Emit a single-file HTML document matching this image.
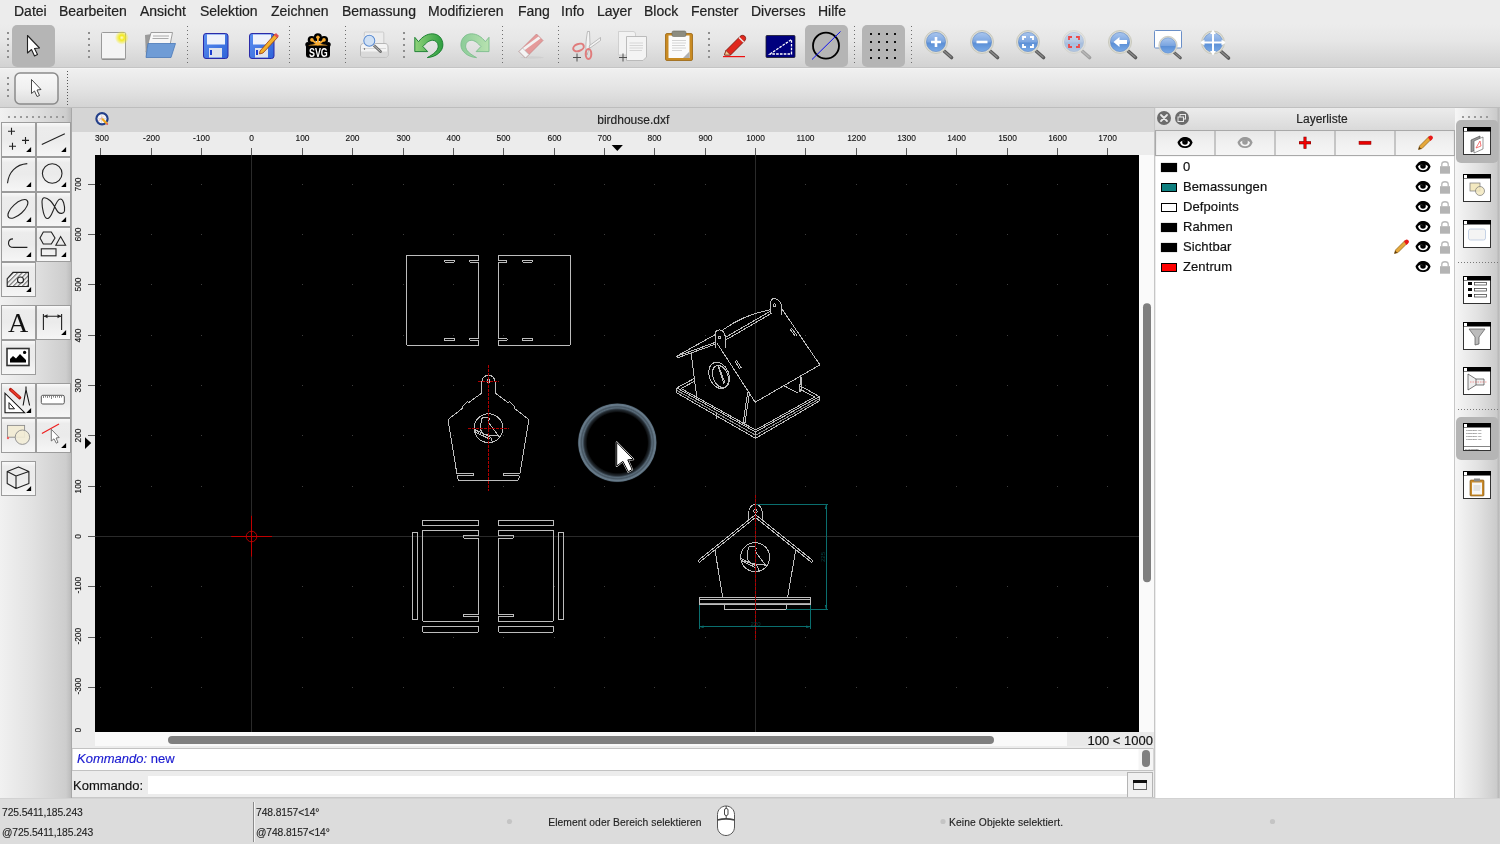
<!DOCTYPE html>
<html><head><meta charset="utf-8">
<style>
*{margin:0;padding:0;box-sizing:border-box}
html,body{width:1500px;height:844px;overflow:hidden;background:#ececec;font-family:"Liberation Sans",sans-serif;color:#222}
.a{position:absolute;will-change:transform}
#menubar{left:0;top:0;width:1500px;height:24px;background:#ececec}
#menubar span{position:absolute;top:3px;font-size:14px;color:#222;line-height:16px;-webkit-text-stroke:0.2px #222}
#tb1{left:0;top:24px;width:1500px;height:44px;background:linear-gradient(#ececec,#e6e6e6 40%,#d2d2d2);border-bottom:1px solid #c4c4c4}
#tb2{left:0;top:68px;width:1500px;height:40px;background:linear-gradient(#f0f0f0,#e4e4e4 50%,#d4d4d4);border-top:1px solid #f4f4f4;border-bottom:1px solid #bdbdbd}
.vdots{position:absolute;width:2px;background:repeating-linear-gradient(#8a8a8a 0 2px,transparent 2px 4px)}
.hdots{position:absolute;height:2px;background:repeating-linear-gradient(90deg,#9a9a9a 0 2px,transparent 2px 4px)}
.sel{position:absolute;background:#b5b5b5;border-radius:5px}
#leftdock{left:0;top:108px;width:71px;height:690px;background:linear-gradient(90deg,#f1f1f1,#e2e2e2 45%,#cdcdcd 93%,#bcbcbc)}
#leftborder{left:71px;top:108px;width:1px;height:690px;background:#a8a8a8}
.tbtn{position:absolute;width:34px;height:34px;border:1px solid #9c9c9c;background:linear-gradient(#fafafa,#efefef 50%,#e2e2e2)}
#mdi{left:72px;top:108px;width:1082px;height:639px;background:#ececec}
#mdititle{left:72px;top:108px;width:1082px;height:24px;background:#d5d5d5}
#hruler{left:72px;top:132px;width:1082px;height:23px;background:#ececec}
#vruler{left:72px;top:155px;width:23px;height:592px;background:#ececec}
#canvas{left:95px;top:155px;width:1044px;height:577px;background:#000}
#vscroll{left:1139px;top:155px;width:15px;height:577px;background:#fafafa}
#hscroll{left:95px;top:732px;width:1044px;height:14px;background:#fafafa}
#cmdhist{left:72px;top:749px;width:1082px;height:22px;background:#fff;border-top:1px solid #b8b8b8;border-bottom:1px solid #b8b8b8}
#cmdline{left:72px;top:771px;width:1082px;height:27px;background:#ececec}
#layerdock{left:1154px;top:108px;width:301px;height:690px;background:#ececec;border-left:2px solid #c9c9c9}
#rightdock{left:1455px;top:108px;width:45px;height:690px;background:linear-gradient(90deg,#f4f4f4,#dedede 60%,#cdcdcd)}
#status{left:0;top:798px;width:1500px;height:46px;background:#dcdcdc}
.st{position:absolute;font-size:10.5px;color:#262626;line-height:12px;letter-spacing:0.2px}
</style></head><body>
<div id="menubar" class="a">
<span style="left:14px">Datei</span>
<span style="left:59px">Bearbeiten</span>
<span style="left:140px">Ansicht</span>
<span style="left:200px">Selektion</span>
<span style="left:271px">Zeichnen</span>
<span style="left:342px">Bemassung</span>
<span style="left:428px">Modifizieren</span>
<span style="left:518px">Fang</span>
<span style="left:561px">Info</span>
<span style="left:597px">Layer</span>
<span style="left:644px">Block</span>
<span style="left:691px">Fenster</span>
<span style="left:751px">Diverses</span>
<span style="left:818px">Hilfe</span>
</div>
<div id="tb1" class="a"></div>
<div id="tb2" class="a"></div>
<svg class="a" style="left:0;top:24px" width="1500" height="44" viewBox="0 24 1500 44">
<defs>
<linearGradient id="gBlue" x1="0" y1="0" x2="0" y2="1"><stop offset="0" stop-color="#a9c6ee"/><stop offset="0.5" stop-color="#7ba5e0"/><stop offset="0.55" stop-color="#5b8fd6"/><stop offset="1" stop-color="#7aaae6"/></linearGradient>
<linearGradient id="gFlop" x1="0" y1="0" x2="1" y2="1"><stop offset="0" stop-color="#5b8ff0"/><stop offset="1" stop-color="#2f63d8"/></linearGradient>
<radialGradient id="gGlow"><stop offset="0" stop-color="#fffbd0"/><stop offset="0.35" stop-color="#f3ea20"/><stop offset="1" stop-color="#f3ea20" stop-opacity="0"/></radialGradient>
<g id="lens">
 <path d="M7.5 8.5 L15.5 15.5" stroke="#5a5a5a" stroke-width="3.6" stroke-linecap="round"/>
 <path d="M8 9 L15 15" stroke="#8a8a8a" stroke-width="1.3" stroke-linecap="round"/>
 <circle cx="0" cy="0" r="11.5" fill="#dcdcd4" stroke="#c8c8bc" stroke-width="1"/>
 <circle cx="0" cy="0" r="9.6" fill="url(#gBlue)" stroke="#5a86c8" stroke-width="0.6"/>
</g>
</defs>
<!-- handles -->
<g fill="#8e8e8e">
 <rect x="7" y="32" width="2" height="2"/><rect x="7" y="38" width="2" height="2"/><rect x="7" y="44" width="2" height="2"/><rect x="7" y="50" width="2" height="2"/><rect x="7" y="56" width="2" height="2"/>
 <rect x="88" y="32" width="2" height="2"/><rect x="88" y="38" width="2" height="2"/><rect x="88" y="44" width="2" height="2"/><rect x="88" y="50" width="2" height="2"/><rect x="88" y="56" width="2" height="2"/>
 <rect x="403" y="32" width="2" height="2"/><rect x="403" y="38" width="2" height="2"/><rect x="403" y="44" width="2" height="2"/><rect x="403" y="50" width="2" height="2"/><rect x="403" y="56" width="2" height="2"/>
 <rect x="708" y="32" width="2" height="2"/><rect x="708" y="38" width="2" height="2"/><rect x="708" y="44" width="2" height="2"/><rect x="708" y="50" width="2" height="2"/><rect x="708" y="56" width="2" height="2"/>
</g>
<!-- separators -->
<g stroke="#6e6e6e" stroke-width="1" stroke-dasharray="1 3">
 <path d="M187.5 26 V66"/><path d="M289.5 26 V66"/><path d="M345.5 26 V66"/><path d="M502.5 26 V66"/><path d="M558.5 26 V66"/><path d="M854.5 26 V66"/><path d="M911.5 26 V66"/>
</g>
<!-- selected bgs -->
<rect x="12" y="25" width="43" height="42" rx="5" fill="#b5b5b5"/>
<rect x="805" y="25" width="43" height="42" rx="5" fill="#b5b5b5"/>
<rect x="862" y="25" width="43" height="42" rx="5" fill="#b5b5b5"/>
<!-- pointer -->
<path d="M27.5 35.5 V53 L31.5 49.5 L34.5 56 L37.5 54.5 L34.5 48.5 L39.5 48 Z" fill="#fff" stroke="#222" stroke-width="1.1" stroke-linejoin="round"/>
<!-- new doc -->
<rect x="101.5" y="32.5" width="24" height="27" rx="1" fill="#f4f4f4" stroke="#9a9a9a"/>
<rect x="102" y="58" width="23" height="2" fill="#8a8a8a" opacity="0.6"/>
<circle cx="121.8" cy="37.7" r="7" fill="url(#gGlow)"/>
<!-- open folder -->
<path d="M145 35 L152 34 L150 57 L146 57 Z" fill="#9a9a9a"/>
<path d="M151 32.5 L172.5 32.5 L169 50 L146 52 Z" fill="#f7f7f7" stroke="#8a8a8a" stroke-width="0.8"/>
<path d="M153 36 H169 M152.5 38.5 H168.5" stroke="#aaa" stroke-width="1"/>
<path d="M148 43.5 L175.5 43.5 L171 57.5 L146 57.5 Z" fill="#6f9cd6" stroke="#4a78b8" stroke-width="0.8"/>
<!-- save -->
<rect x="203.5" y="33.5" width="24.5" height="25" rx="2.5" fill="url(#gFlop)" stroke="#2a2aa8" stroke-width="1"/>
<rect x="207" y="34.5" width="18" height="10" fill="#eef2fb"/>
<rect x="209" y="48" width="13" height="9.5" fill="#dfe3ec"/>
<rect x="210" y="50" width="2" height="5" fill="#1f3fd0"/>
<!-- save as -->
<rect x="249.5" y="33.5" width="24.5" height="25" rx="2.5" fill="url(#gFlop)" stroke="#2a2aa8" stroke-width="1"/>
<rect x="253" y="34.5" width="18" height="10" fill="#eef2fb"/>
<rect x="255" y="48" width="13" height="9.5" fill="#dfe3ec"/>
<rect x="256" y="50" width="2" height="5" fill="#1f3fd0"/>
<path d="M260 51 L275 34 L278 37 L263 53 L259.5 54 Z" fill="#f2b02a" stroke="#9a3a10" stroke-width="0.8"/>
<path d="M274 35 L276 33 L279 36 L277 38 Z" fill="#e25050"/>
<!-- svg logo -->
<rect x="306" y="43.3" width="24" height="14.5" rx="3" fill="#000"/>
<circle cx="317.9" cy="37.3" r="4" fill="#000"/><circle cx="311.7" cy="40" r="4" fill="#000"/><circle cx="324.1" cy="40" r="4" fill="#000"/>
<circle cx="307.8" cy="44.5" r="2.5" fill="#000"/><circle cx="328.2" cy="44.5" r="2.5" fill="#000"/>
<g stroke="#f9ac30" stroke-linecap="round" fill="none">
<path d="M317.9 44.5 V37.3 M317.9 44.5 L311.9 40 M317.9 44.5 L324 40" stroke-width="1.8"/>
</g>
<circle cx="317.9" cy="37.3" r="1.8" fill="#f9ac30"/><circle cx="311.9" cy="39.9" r="1.8" fill="#f9ac30"/><circle cx="324" cy="39.9" r="1.8" fill="#f9ac30"/>
<path d="M308 45.5 C311 44.5 314 44 317.9 44 C322 44 325 44.5 328 45.5 Z" fill="#f9ac30"/>
<text x="309" y="56.6" font-family="Liberation Sans" font-weight="bold" font-size="12.5" fill="#fff" textLength="18.8" lengthAdjust="spacingAndGlyphs">SVG</text>
<!-- print preview -->
<rect x="364.3" y="32" width="19.5" height="14" rx="1" fill="#ececec" stroke="#c4c4c4" stroke-width="0.8"/>
<path d="M360.5 47 C360.5 45 361.5 43.5 363.5 43.5 H385 C387 43.5 388 45 388 47 V55 C388 56.5 387 57 385.5 57 H363 C361.5 57 360.5 56.5 360.5 55 Z" fill="#f4f4f4" stroke="#a8a8a8" stroke-width="0.8"/>
<rect x="361" y="51.5" width="26.5" height="5" fill="#dadada"/>
<path d="M362.5 48.5 H386" stroke="#d0d0d0" stroke-width="0.8"/>
<circle cx="364.5" cy="49" r="0.7" fill="#555"/>
<path d="M374 45.5 L380.5 51.5" stroke="#6a6a6a" stroke-width="2.8" stroke-linecap="round"/>
<path d="M374.3 45.8 L380.2 51.2" stroke="#bdbdbd" stroke-width="1" stroke-linecap="round"/>
<circle cx="369.3" cy="40.7" r="6.6" fill="#f6f6f6" opacity="0.9"/>
<circle cx="369.3" cy="40.7" r="5.5" fill="#cfe0f4" stroke="#5b8bd0" stroke-width="1.1"/>
<!-- undo -->
<defs><linearGradient id="gUndo" x1="0" y1="0" x2="1" y2="0"><stop offset="0" stop-color="#8fd27a"/><stop offset="1" stop-color="#2e9e40"/></linearGradient>
<linearGradient id="gRedo" x1="1" y1="0" x2="0" y2="0"><stop offset="0" stop-color="#b8e2b0"/><stop offset="1" stop-color="#8ccc98"/></linearGradient></defs>
<path d="M414.8 37.3 L418.5 41.7 C422 37 427 33.8 432.2 33.8 C438.5 33.8 442.9 38.5 442.9 44.9 C442.9 51.5 436 57 427.3 57.6 C434 54 438.2 50.5 438.2 46.1 C438.2 42.5 435.5 40.3 432.6 40.3 C429 40.3 426 43 422.9 46.5 L427.7 51.6 L414.8 51.6 Z" fill="url(#gUndo)" stroke="#137a2a" stroke-width="0.9" stroke-linejoin="round"/>
<!-- redo faded -->
<path d="M 489.0 37.3 L 485.3 41.7 C 481.8 37.0 476.8 33.8 471.6 33.8 C 465.3 33.8 460.9 38.5 460.9 44.9 C 460.9 51.5 467.8 57.0 476.5 57.6 C 469.8 54.0 465.6 50.5 465.6 46.1 C 465.6 42.5 468.3 40.3 471.2 40.3 C 474.8 40.3 477.8 43.0 480.9 46.5 L 476.1 51.6 L 489.0 51.6 Z" fill="url(#gRedo)" stroke="#7cbc8c" stroke-width="0.9" stroke-linejoin="round"/>
<!-- eraser faded -->
<ellipse cx="532" cy="57.5" rx="12" ry="1.2" fill="#cfcfcf"/>
<path d="M519 51.5 L536.5 34 L543 40.5 L525.5 58 Z" fill="#e49a9a" stroke="#c48080" stroke-width="0.7"/>
<path d="M521.5 49 L538.5 36.5 L540.5 38.5 L523.5 51 Z" fill="#f2f2f2"/>
<path d="M519 51.5 L522.5 48 L529 54.5 L525.5 58 Z" fill="#f4f4f4" stroke="#aaa" stroke-width="0.6"/>
<!-- cut -->
<path d="M587 55 C585 50 586 40 587.5 31.5 L589.5 31.5 L590 45 Z" fill="#f4f4f4" stroke="#9a9a9a" stroke-width="0.6"/>
<path d="M589 46 L600.5 37.5 L600.5 40.5 L590 48 Z" fill="#f4f4f4" stroke="#9a9a9a" stroke-width="0.6"/>
<ellipse cx="578.5" cy="47.5" rx="5.5" ry="3.5" fill="none" stroke="#e07c7c" stroke-width="2" transform="rotate(-20 578.5 47.5)"/>
<ellipse cx="588.5" cy="54" rx="2.8" ry="5" fill="none" stroke="#e07c7c" stroke-width="2"/>
<path d="M573 57.5 H581 M577 53.5 V61.5" stroke="#505050" stroke-width="1"/>
<!-- copy -->
<path d="M618.5 31.5 H633 C634.5 31.5 635.5 32.5 635.5 34 V55 H618.5 Z" fill="#f2f2f2" stroke="#c8c8c8" stroke-width="0.8"/>
<path d="M626.5 36.5 H646.5 V57 L643 60.5 H626.5 Z" fill="#f4f4f4" stroke="#b5b5b5" stroke-width="0.9"/>
<path d="M629.5 43 H643 M629.5 45.5 H643 M629.5 48 H643 M629.5 50.5 H642" stroke="#d2d2d2" stroke-width="0.9"/>
<path d="M619 57.5 H627 M623 53.5 V61.5" stroke="#505050" stroke-width="1"/>
<!-- paste -->
<rect x="665.5" y="33.5" width="27" height="27" rx="1.5" fill="#c88a22" stroke="#9a6410" stroke-width="0.8"/>
<rect x="668.5" y="35.5" width="21" height="22.5" fill="#fbfbfb"/>
<path d="M672 40.5 H686 M672 43 H686 M672 45.5 H685 M672 48 H686 M672 50.5 H682" stroke="#cfcfcf" stroke-width="0.9"/>
<path d="M683 58 L689.5 51.5 L689.5 58 Z" fill="#b0b0b0"/>
<rect x="672" y="31" width="14" height="5.5" rx="1.5" fill="#8c8c80" stroke="#6a6a60" stroke-width="0.6"/>
<!-- pencil red -->
<path d="M724.5 55 L726 50.5 L740 36.5 C741.5 35 743.5 35 744.8 36.3 C746 37.6 746 39.5 744.5 41 L730.5 55 Z" fill="#e0281e" stroke="#7a1a10" stroke-width="0.9" stroke-linejoin="round"/>
<path d="M739 37.5 L743.8 42.3" stroke="#e8e8e8" stroke-width="1.5"/>
<path d="M724.5 55 L726 50.5 L730.5 55 Z" fill="#f0c890" stroke="#7a1a10" stroke-width="0.6"/>
<rect x="723" y="56" width="22" height="1.2" fill="#ee1010"/>
<!-- blue triangle -->
<rect x="766" y="35.5" width="29" height="22" rx="1" fill="#00007e" stroke="#1a1a2a" stroke-width="0.8"/>
<path d="M770 54 L791.5 39.5 L791.5 54 Z" fill="none" stroke="#fff" stroke-width="1.3" stroke-dasharray="2.6 1.2"/>
<!-- circle slash -->
<circle cx="826" cy="45.7" r="13" fill="none" stroke="#000" stroke-width="1.8"/>
<path d="M812 59.5 L840.5 31.5" stroke="#1010f0" stroke-width="1"/>
<!-- grid -->
<g fill="#111">
<rect x="870" y="33" width="2" height="2"/><rect x="878" y="33" width="2" height="2"/><rect x="886" y="33" width="2" height="2"/><rect x="894" y="33" width="2" height="2"/>
<rect x="870" y="41" width="2" height="2"/><rect x="878" y="41" width="2" height="2"/><rect x="886" y="41" width="2" height="2"/><rect x="894" y="41" width="2" height="2"/>
<rect x="870" y="49" width="2" height="2"/><rect x="878" y="49" width="2" height="2"/><rect x="886" y="49" width="2" height="2"/><rect x="894" y="49" width="2" height="2"/>
<rect x="870" y="57" width="2" height="2"/><rect x="878" y="57" width="2" height="2"/><rect x="886" y="57" width="2" height="2"/><rect x="894" y="57" width="2" height="2"/>
</g>
<!-- zoom icons -->
<use href="#lens" x="936" y="42"/>
<path d="M931 42 H941 M936 37 V47" stroke="#fff" stroke-width="2.6"/>
<use href="#lens" x="982" y="42"/>
<path d="M976.5 42 H987.5" stroke="#fff" stroke-width="2.6"/>
<use href="#lens" x="1028" y="42"/>
<path d="M1023 40 V37 H1026 M1030 37 H1033 V40 M1033 44 V47 H1030 M1026 47 H1023 V44" stroke="#fff" stroke-width="1.8" fill="none"/>
<g opacity="0.45"><use href="#lens" x="1074" y="42"/></g>
<path d="M1069 40 V37 H1072 M1076 37 H1079 V40 M1079 44 V47 H1076 M1072 47 H1069 V44" stroke="#ec4a4a" stroke-width="1.8" fill="none"/>
<use href="#lens" x="1120" y="42"/>
<path d="M1113.5 42 L1119.5 37 V40 H1127 V44 H1119.5 V47 Z" fill="#fff"/>
<rect x="1154.5" y="30.5" width="27" height="17.5" rx="1" fill="#fff" stroke="#6a8fc8" stroke-width="1"/>
<use href="#lens" x="1168" y="45.5" transform="translate(1168 45.5) scale(0.8) translate(-1168 -45.5)"/>
<use href="#lens" x="1213" y="42.5"/>
<path d="M1213 30.5 V54.5 M1201 42.5 H1225" stroke="#fff" stroke-width="2"/>
<path d="M1213 30 L1210 34 H1216 Z M1213 55 L1210 51 H1216 Z M1200.5 42.5 L1204.5 39.5 V45.5 Z M1225.5 42.5 L1221.5 39.5 V45.5 Z" fill="#fff"/>
</svg>

<svg class="a" style="left:0;top:68px" width="1500" height="40" viewBox="0 68 1500 40">
<g fill="#8e8e8e"><rect x="7" y="77" width="2" height="2"/><rect x="7" y="83" width="2" height="2"/><rect x="7" y="89" width="2" height="2"/><rect x="7" y="95" width="2" height="2"/></g>
<defs><linearGradient id="gBtn2" x1="0" y1="0" x2="0" y2="1"><stop offset="0" stop-color="#f8f8f8"/><stop offset="0.5" stop-color="#f0f0f0"/><stop offset="1" stop-color="#dcdcdc"/></linearGradient></defs>
<rect x="15" y="73" width="43" height="31" rx="5" fill="url(#gBtn2)" stroke="#8a8a8a" stroke-width="1.5"/>
<path d="M31.5 79.5 V93.5 L34.5 91 L37 96.5 L39.5 95.5 L37 90 L41 89.5 Z" fill="#fff" stroke="#333" stroke-width="0.9" stroke-linejoin="round"/>
<path d="M67.5 71 V106" stroke="#555" stroke-width="1" stroke-dasharray="1 2"/>
</svg>

<div id="leftdock" class="a"></div>
<div id="leftborder" class="a"></div>
<svg class="a" style="left:0;top:108px" width="72" height="690" viewBox="0 108 72 690">
<defs>
<linearGradient id="gTB" x1="0" y1="0" x2="0" y2="1"><stop offset="0" stop-color="#fafafa"/><stop offset="0.15" stop-color="#ececec"/><stop offset="0.5" stop-color="#ebebeb"/><stop offset="1" stop-color="#f6f6f6"/></linearGradient>
<path id="tri" d="M0 0 V5 H-5 Z" fill="#000"/>
<pattern id="hatch" width="3.2" height="3.2" patternUnits="userSpaceOnUse" patternTransform="rotate(45)"><rect width="3.2" height="3.2" fill="#f4f4f4"/><path d="M0.6 0 V3.2" stroke="#555" stroke-width="0.9"/></pattern>
</defs>
<g fill="#9a9a9a"><rect x="8" y="116" width="2" height="2"/><rect x="14" y="116" width="2" height="2"/><rect x="20" y="116" width="2" height="2"/><rect x="26" y="116" width="2" height="2"/><rect x="32" y="116" width="2" height="2"/><rect x="38" y="116" width="2" height="2"/><rect x="44" y="116" width="2" height="2"/><rect x="50" y="116" width="2" height="2"/><rect x="56" y="116" width="2" height="2"/><rect x="62" y="116" width="2" height="2"/></g>
<g fill="url(#gTB)" stroke="#9c9c9c" stroke-width="1">
<rect x="1.5" y="122.5" width="34" height="34"/><rect x="36.5" y="122.5" width="34" height="34"/>
<rect x="1.5" y="157.5" width="34" height="34"/><rect x="36.5" y="157.5" width="34" height="34"/>
<rect x="1.5" y="192.5" width="34" height="34"/><rect x="36.5" y="192.5" width="34" height="34"/>
<rect x="1.5" y="227.5" width="34" height="34"/><rect x="36.5" y="227.5" width="34" height="34"/>
<rect x="1.5" y="262.5" width="34" height="34"/>
<rect x="1.5" y="305.5" width="34" height="34"/><rect x="36.5" y="305.5" width="34" height="34"/>
<rect x="1.5" y="340.5" width="34" height="34"/>
<rect x="1.5" y="383.5" width="34" height="34"/><rect x="36.5" y="383.5" width="34" height="34"/>
<rect x="1.5" y="418.5" width="34" height="34"/><rect x="36.5" y="418.5" width="34" height="34"/>
<rect x="1.5" y="461.5" width="34" height="34"/>
</g>
<g stroke="#222" stroke-width="1.1" fill="none">
<!-- points -->
<path d="M8 131.2 H15 M11.5 127.7 V134.7 M22 140.4 H29 M25.5 136.9 V143.9 M9 146.2 H16 M12.5 142.7 V149.7"/>
<!-- line -->
<path d="M41.8 144.6 L64.8 133.8"/>
<!-- arc -->
<path d="M7.5 183.3 C8.5 172 16 164.5 27.3 163.6"/>
<!-- circle -->
<circle cx="52.2" cy="173.5" r="9.8"/>
<!-- ellipse -->
<ellipse cx="17.9" cy="208.9" rx="12.5" ry="5.5" transform="rotate(-42 17.9 208.9)"/>
<!-- spline -->
<path d="M42 202 C42 196 46 197 50 200.5 C54 204 56 210 58 212 C60 214 64 214 64.5 211 C65 205 63 199 60.5 199 C57 199 55 206 53 211 C51 216 49 219 47 218.5 C44 218 42 208 42 202 Z"/>
<!-- polyline -->
<path d="M13 238.9 C10 239 8.5 241 8.5 243.2 C8.5 245.8 10.5 247.4 13.7 247.4 H27.4"/>
<!-- shapes -->
<path d="M43.3 232 H51.3 L55 238 L51.3 244 H43.3 L40 238 Z"/>
<path d="M55.8 245.2 L60.6 236.5 L65.6 245.2 Z"/>
<rect x="41.3" y="248.8" width="14.7" height="7"/>
</g>
<!-- hatch -->
<path d="M7.2 286.5 V278.7 L13 272.4 H28.4 V286.5 Z" fill="url(#hatch)" stroke="#222" stroke-width="1.1"/>
<circle cx="20.5" cy="280" r="3" fill="#f2f2f2" stroke="#222" stroke-width="1.1"/>
<!-- text A -->
<text x="18" y="331.8" font-family="Liberation Serif" font-size="28" text-anchor="middle" fill="#111">A</text>
<!-- dimension -->
<path d="M43.4 314 V330 M61.6 314 V330 M44 316.3 H61" stroke="#222" stroke-width="1.1"/>
<path d="M43.8 316.3 L47.5 314.3 V318.3 Z M61.2 316.3 L57.5 314.3 V318.3 Z" fill="#222"/>
<!-- image -->
<rect x="7" y="348.5" width="22" height="17" fill="#fff" stroke="#333" stroke-width="1.6"/>
<path d="M10 362.5 V359 L13 356 L16 358.5 L20 354 L26 360 V362.5 Z" fill="#000"/>
<circle cx="24.6" cy="352.4" r="1.6" fill="#000"/>
<!-- construction -->
<path d="M5 393.2 V412.7 H24.6 Z" fill="#fff" stroke="#111" stroke-width="1.1"/>
<path d="M9 402.6 V408.8 H14.5 Z" fill="none" stroke="#111" stroke-width="1"/>
<path d="M10.5 389.5 L19.7 397.7" stroke="#b31a10" stroke-width="3.2" stroke-linecap="round"/>
<path d="M10.8 389.6 L19.4 397.4" stroke="#e83a2a" stroke-width="1.8"/>
<path d="M26 386.5 V389.5 M26 389.5 L23.1 405.5 M26 389.5 L29.6 405.5" stroke="#111" stroke-width="1.1" fill="none"/>
<!-- ruler -->
<rect x="41.3" y="395.3" width="23" height="8.7" rx="1.5" fill="#fff" stroke="#555" stroke-width="1"/>
<path d="M43.5 396 V398 M45.5 396 V397.5 M47.5 396 V398 M49.5 396 V397.5 M51.5 396 V399 M53.5 396 V397.5 M55.5 396 V398 M57.5 396 V397.5 M59.5 396 V398 M61.5 396 V397.5" stroke="#555" stroke-width="0.7"/>
<!-- modify -->
<rect x="7.5" y="425.4" width="17.1" height="11.8" fill="#f2ecd6" stroke="#8c8c8c" stroke-width="0.9"/>
<circle cx="22.4" cy="437.2" r="7.2" fill="#f2ecd6" fill-opacity="0.9" stroke="#8c8c8c" stroke-width="0.9"/>
<circle cx="8" cy="438" r="1.2" fill="#f06060"/>
<!-- select -->
<path d="M41.9 433.6 L59 424" stroke="#ee2020" stroke-width="1.2"/>
<path d="M51.3 429.3 V441 L54 438.8 L56.3 443.2 L58 442.3 L56 438 L59.2 437.5 Z" fill="#fff" stroke="#555" stroke-width="0.8" stroke-linejoin="round"/>
<!-- cube -->
<path d="M7.2 471.5 L18.5 466.9 L28.9 471.5 V483.5 L16 488.5 L7.2 483.5 Z M7.2 471.5 L16 476 L28.9 471.5 M16 476 V488.5" fill="none" stroke="#222" stroke-width="1.1" stroke-linejoin="round"/>
<g fill="#000">
<use href="#tri" x="31.1" y="147"/><use href="#tri" x="66.1" y="147"/>
<use href="#tri" x="31.1" y="182"/><use href="#tri" x="66.1" y="182"/>
<use href="#tri" x="31.1" y="217"/><use href="#tri" x="66.1" y="217"/>
<use href="#tri" x="31.1" y="252"/><use href="#tri" x="66.1" y="252"/>
<use href="#tri" x="31.1" y="287"/>
<use href="#tri" x="66.1" y="330"/>
<use href="#tri" x="31.1" y="408"/>
<use href="#tri" x="66.1" y="443"/>
<use href="#tri" x="31.1" y="486"/>
</g>
</svg>

<div id="mdi" class="a"></div>
<div id="mdititle" class="a"></div>
<div id="hruler" class="a"></div>
<div id="vruler" class="a"></div>
<div id="canvas" class="a"></div>
<div id="vscroll" class="a"></div>
<div id="hscroll" class="a"></div>
<svg class="a" style="left:72px;top:108px" width="1082" height="639" viewBox="72 108 1082 639">
<g>
<circle cx="102" cy="118.8" r="5.6" fill="#f4f4f6" stroke="#24408a" stroke-width="2.2"/>
<path d="M97.5 118.5 H106.5 M101.5 114.5 V123" stroke="#cfcfcf" stroke-width="0.6"/>
<path d="M98.5 121 L103 116.5" stroke="#e07070" stroke-width="0.6"/>
<path d="M102.6 119.3 L106.6 123.3" stroke="#f2a81c" stroke-width="2.2" stroke-linecap="round"/>
<circle cx="107.2" cy="124" r="1" fill="#e06060"/>
</g>
<text x="633.3" y="124.2" font-family="Liberation Sans" font-size="12" fill="#222" stroke="#222" stroke-width="0.15" text-anchor="middle">birdhouse.dxf</text>
<g font-family="Liberation Sans" font-size="9.8" fill="#111" stroke="#111" stroke-width="0.12" text-anchor="middle">
<text transform="translate(100.5 141) scale(0.86 1)">-300</text>
<text transform="translate(151.5 141) scale(0.86 1)">-200</text>
<text transform="translate(201.5 141) scale(0.86 1)">-100</text>
<text transform="translate(251.5 141) scale(0.86 1)">0</text>
<text transform="translate(302.5 141) scale(0.86 1)">100</text>
<text transform="translate(352.5 141) scale(0.86 1)">200</text>
<text transform="translate(403.5 141) scale(0.86 1)">300</text>
<text transform="translate(453.5 141) scale(0.86 1)">400</text>
<text transform="translate(503.5 141) scale(0.86 1)">500</text>
<text transform="translate(554.5 141) scale(0.86 1)">600</text>
<text transform="translate(604.5 141) scale(0.86 1)">700</text>
<text transform="translate(654.5 141) scale(0.86 1)">800</text>
<text transform="translate(705.5 141) scale(0.86 1)">900</text>
<text transform="translate(755.5 141) scale(0.86 1)">1000</text>
<text transform="translate(805.5 141) scale(0.86 1)">1100</text>
<text transform="translate(856.5 141) scale(0.86 1)">1200</text>
<text transform="translate(906.5 141) scale(0.86 1)">1300</text>
<text transform="translate(956.5 141) scale(0.86 1)">1400</text>
<text transform="translate(1007.5 141) scale(0.86 1)">1500</text>
<text transform="translate(1057.5 141) scale(0.86 1)">1600</text>
<text transform="translate(1107.5 141) scale(0.86 1)">1700</text>
</g>
<rect x="72" y="132" width="23" height="23" fill="#ececec"/>
<g font-family="Liberation Sans" font-size="9.8" fill="#111" stroke="#111" stroke-width="0.12" text-anchor="middle">
<text x="0" y="0" transform="translate(81.3 736.2) rotate(-90) scale(0.86 1)">-400</text>
<text x="0" y="0" transform="translate(81.3 686.2) rotate(-90) scale(0.86 1)">-300</text>
<text x="0" y="0" transform="translate(81.3 636.2) rotate(-90) scale(0.86 1)">-200</text>
<text x="0" y="0" transform="translate(81.3 585.2) rotate(-90) scale(0.86 1)">-100</text>
<text x="0" y="0" transform="translate(81.3 536.5) rotate(-90) scale(0.86 1)">0</text>
<text x="0" y="0" transform="translate(81.3 486.5) rotate(-90) scale(0.86 1)">100</text>
<text x="0" y="0" transform="translate(81.3 435.5) rotate(-90) scale(0.86 1)">200</text>
<text x="0" y="0" transform="translate(81.3 385.5) rotate(-90) scale(0.86 1)">300</text>
<text x="0" y="0" transform="translate(81.3 335.5) rotate(-90) scale(0.86 1)">400</text>
<text x="0" y="0" transform="translate(81.3 284.5) rotate(-90) scale(0.86 1)">500</text>
<text x="0" y="0" transform="translate(81.3 234.5) rotate(-90) scale(0.86 1)">600</text>
<text x="0" y="0" transform="translate(81.3 184.5) rotate(-90) scale(0.86 1)">700</text>
</g>
<path d="M100.5 148 V155 M151.5 148 V155 M201.5 148 V155 M251.5 148 V155 M302.5 148 V155 M352.5 148 V155 M403.5 148 V155 M453.5 148 V155 M503.5 148 V155 M554.5 148 V155 M604.5 148 V155 M654.5 148 V155 M705.5 148 V155 M755.5 148 V155 M805.5 148 V155 M856.5 148 V155 M906.5 148 V155 M956.5 148 V155 M1007.5 148 V155 M1057.5 148 V155 M1107.5 148 V155 M88 737.5 H95 M88 687.5 H95 M88 637.5 H95 M88 586.5 H95 M88 536.5 H95 M88 486.5 H95 M88 435.5 H95 M88 385.5 H95 M88 335.5 H95 M88 284.5 H95 M88 234.5 H95 M88 184.5 H95" stroke="#5a5a5a" stroke-width="1"/>
<rect x="72" y="732" width="23" height="15" fill="#ececec"/>
<path d="M611.7 145 H622.9 L617.3 151 Z" fill="#000"/>
<path d="M85 437.3 V449 L91.2 443.1 Z" fill="#000"/>
<rect x="1143" y="303.3" width="8" height="279" rx="4" fill="#7f7f7f"/>
<rect x="95" y="732" width="972" height="14" fill="#f9f9f9"/>
<rect x="1067" y="732" width="87" height="14" fill="#e9e9e9"/>
<rect x="168" y="736" width="826" height="8" rx="4" fill="#7f7f7f"/>
<text x="1153" y="745" font-family="Liberation Sans" font-size="13" fill="#111" stroke="#111" stroke-width="0.15" text-anchor="end">100 &lt; 1000</text>
</svg>
<svg class="a" style="left:95px;top:155px" width="1044" height="577" viewBox="95 155 1044 577">
<path d="M100 687h1v1h-1zM100 637h1v1h-1zM100 586h1v1h-1zM100 536h1v1h-1zM100 486h1v1h-1zM100 435h1v1h-1zM100 385h1v1h-1zM100 335h1v1h-1zM100 284h1v1h-1zM100 234h1v1h-1zM100 184h1v1h-1zM151 687h1v1h-1zM151 637h1v1h-1zM151 586h1v1h-1zM151 536h1v1h-1zM151 486h1v1h-1zM151 435h1v1h-1zM151 385h1v1h-1zM151 335h1v1h-1zM151 284h1v1h-1zM151 234h1v1h-1zM151 184h1v1h-1zM201 687h1v1h-1zM201 637h1v1h-1zM201 586h1v1h-1zM201 536h1v1h-1zM201 486h1v1h-1zM201 435h1v1h-1zM201 385h1v1h-1zM201 335h1v1h-1zM201 284h1v1h-1zM201 234h1v1h-1zM201 184h1v1h-1zM251 687h1v1h-1zM251 637h1v1h-1zM251 586h1v1h-1zM251 536h1v1h-1zM251 486h1v1h-1zM251 435h1v1h-1zM251 385h1v1h-1zM251 335h1v1h-1zM251 284h1v1h-1zM251 234h1v1h-1zM251 184h1v1h-1zM302 687h1v1h-1zM302 637h1v1h-1zM302 586h1v1h-1zM302 536h1v1h-1zM302 486h1v1h-1zM302 435h1v1h-1zM302 385h1v1h-1zM302 335h1v1h-1zM302 284h1v1h-1zM302 234h1v1h-1zM302 184h1v1h-1zM352 687h1v1h-1zM352 637h1v1h-1zM352 586h1v1h-1zM352 536h1v1h-1zM352 486h1v1h-1zM352 435h1v1h-1zM352 385h1v1h-1zM352 335h1v1h-1zM352 284h1v1h-1zM352 234h1v1h-1zM352 184h1v1h-1zM403 687h1v1h-1zM403 637h1v1h-1zM403 586h1v1h-1zM403 536h1v1h-1zM403 486h1v1h-1zM403 435h1v1h-1zM403 385h1v1h-1zM403 335h1v1h-1zM403 284h1v1h-1zM403 234h1v1h-1zM403 184h1v1h-1zM453 687h1v1h-1zM453 637h1v1h-1zM453 586h1v1h-1zM453 536h1v1h-1zM453 486h1v1h-1zM453 435h1v1h-1zM453 385h1v1h-1zM453 335h1v1h-1zM453 284h1v1h-1zM453 234h1v1h-1zM453 184h1v1h-1zM503 687h1v1h-1zM503 637h1v1h-1zM503 586h1v1h-1zM503 536h1v1h-1zM503 486h1v1h-1zM503 435h1v1h-1zM503 385h1v1h-1zM503 335h1v1h-1zM503 284h1v1h-1zM503 234h1v1h-1zM503 184h1v1h-1zM554 687h1v1h-1zM554 637h1v1h-1zM554 586h1v1h-1zM554 536h1v1h-1zM554 486h1v1h-1zM554 435h1v1h-1zM554 385h1v1h-1zM554 335h1v1h-1zM554 284h1v1h-1zM554 234h1v1h-1zM554 184h1v1h-1zM604 687h1v1h-1zM604 637h1v1h-1zM604 586h1v1h-1zM604 536h1v1h-1zM604 486h1v1h-1zM604 435h1v1h-1zM604 385h1v1h-1zM604 335h1v1h-1zM604 284h1v1h-1zM604 234h1v1h-1zM604 184h1v1h-1zM654 687h1v1h-1zM654 637h1v1h-1zM654 586h1v1h-1zM654 536h1v1h-1zM654 486h1v1h-1zM654 435h1v1h-1zM654 385h1v1h-1zM654 335h1v1h-1zM654 284h1v1h-1zM654 234h1v1h-1zM654 184h1v1h-1zM705 687h1v1h-1zM705 637h1v1h-1zM705 586h1v1h-1zM705 536h1v1h-1zM705 486h1v1h-1zM705 435h1v1h-1zM705 385h1v1h-1zM705 335h1v1h-1zM705 284h1v1h-1zM705 234h1v1h-1zM705 184h1v1h-1zM755 687h1v1h-1zM755 637h1v1h-1zM755 586h1v1h-1zM755 536h1v1h-1zM755 486h1v1h-1zM755 435h1v1h-1zM755 385h1v1h-1zM755 335h1v1h-1zM755 284h1v1h-1zM755 234h1v1h-1zM755 184h1v1h-1zM805 687h1v1h-1zM805 637h1v1h-1zM805 586h1v1h-1zM805 536h1v1h-1zM805 486h1v1h-1zM805 435h1v1h-1zM805 385h1v1h-1zM805 335h1v1h-1zM805 284h1v1h-1zM805 234h1v1h-1zM805 184h1v1h-1zM856 687h1v1h-1zM856 637h1v1h-1zM856 586h1v1h-1zM856 536h1v1h-1zM856 486h1v1h-1zM856 435h1v1h-1zM856 385h1v1h-1zM856 335h1v1h-1zM856 284h1v1h-1zM856 234h1v1h-1zM856 184h1v1h-1zM906 687h1v1h-1zM906 637h1v1h-1zM906 586h1v1h-1zM906 536h1v1h-1zM906 486h1v1h-1zM906 435h1v1h-1zM906 385h1v1h-1zM906 335h1v1h-1zM906 284h1v1h-1zM906 234h1v1h-1zM906 184h1v1h-1zM956 687h1v1h-1zM956 637h1v1h-1zM956 586h1v1h-1zM956 536h1v1h-1zM956 486h1v1h-1zM956 435h1v1h-1zM956 385h1v1h-1zM956 335h1v1h-1zM956 284h1v1h-1zM956 234h1v1h-1zM956 184h1v1h-1zM1007 687h1v1h-1zM1007 637h1v1h-1zM1007 586h1v1h-1zM1007 536h1v1h-1zM1007 486h1v1h-1zM1007 435h1v1h-1zM1007 385h1v1h-1zM1007 335h1v1h-1zM1007 284h1v1h-1zM1007 234h1v1h-1zM1007 184h1v1h-1zM1057 687h1v1h-1zM1057 637h1v1h-1zM1057 586h1v1h-1zM1057 536h1v1h-1zM1057 486h1v1h-1zM1057 435h1v1h-1zM1057 385h1v1h-1zM1057 335h1v1h-1zM1057 284h1v1h-1zM1057 234h1v1h-1zM1057 184h1v1h-1zM1107 687h1v1h-1zM1107 637h1v1h-1zM1107 586h1v1h-1zM1107 536h1v1h-1zM1107 486h1v1h-1zM1107 435h1v1h-1zM1107 385h1v1h-1zM1107 335h1v1h-1zM1107 284h1v1h-1zM1107 234h1v1h-1zM1107 184h1v1h-1z" fill="#3e3e3e"/>
<path d="M755.5 155 V732 M251.5 155 V732 M95 536.5 H1139" stroke="#2a2a2a" stroke-width="1"/>
<defs>
<radialGradient id="gRing" cx="617.3" cy="442.7" r="39.6" gradientUnits="userSpaceOnUse">
<stop offset="0" stop-color="#5f7282" stop-opacity="0"/>
<stop offset="0.76" stop-color="#5f7282" stop-opacity="0"/>
<stop offset="0.83" stop-color="#4a5a68" stop-opacity="0.45"/>
<stop offset="0.875" stop-color="#5d707f" stop-opacity="0.95"/>
<stop offset="0.91" stop-color="#50616f" stop-opacity="0.9"/>
<stop offset="0.95" stop-color="#6a7d8c" stop-opacity="1"/>
<stop offset="0.975" stop-color="#5f7382" stop-opacity="1"/>
<stop offset="1" stop-color="#5a6d7c" stop-opacity="0.2"/>
</radialGradient>
</defs>
<g fill="none" stroke="#bdbdbd" stroke-width="1" stroke-linejoin="round" shape-rendering="crispEdges">
<!-- top left panel -->
<path d="M478.6 260.1 V256 Q478.6 255 477.6 255 H407.5 Q406.5 255 406.5 256 V344.1 Q406.5 345.1 407.5 345.1 H478.6 V340.6 H470.7 Q469.7 340.6 469.7 339.45 Q469.7 338.3 470.7 338.3 H478.6 V262.2 H470.7 Q469.7 262.2 469.7 261.15 Q469.7 260.1 470.7 260.1 Z"/>
<rect x="444.4" y="260.1" width="10.3" height="2.1" rx="1"/>
<rect x="444.4" y="338.3" width="10.3" height="2.3" rx="1"/>
<!-- top right panel (mirror) -->
<path d="M498.2 260.1 V256 Q498.2 255 499.2 255 H569.3 Q570.3 255 570.3 256 V344.1 Q570.3 345.1 569.3 345.1 H498.2 V340.6 H506.1 Q507.1 340.6 507.1 339.45 Q507.1 338.3 506.1 338.3 H498.2 V262.2 H506.1 Q507.1 262.2 507.1 261.15 Q507.1 260.1 506.1 260.1 Z"/>
<rect x="522.1" y="260.1" width="10.3" height="2.1" rx="1"/>
<rect x="522.1" y="338.3" width="10.3" height="2.3" rx="1"/>
<!-- front piece -->
<path d="M481.8 393 V381.9 A6.65 6.65 0 0 1 495.1 381.9 V393 L508 402.5 L509.5 401.5 L514.5 406.5 L514 408 L528.9 419.6 L520 473.3 H503.9 Q503.4 473.3 503.4 474.4 Q503.4 475.5 503.9 475.5 H518 Q519.5 475.5 519.2 477 L518.8 479 Q518.5 480.4 517 480.4 H459.8 Q458.3 480.4 458 479 L457.6 477 Q457.3 475.5 458.8 475.5 H472.9 Q473.4 475.5 473.4 474.4 Q473.4 473.3 472.9 473.3 H456.8 L448 419.6 L462.8 408 L462.3 406.5 L467.3 401.5 L468.8 402.5 Z"/>
<circle cx="488.4" cy="381.1" r="1.5"/>
<circle cx="488.5" cy="428.2" r="14.4"/>
<path d="M489.6 419 C488 417.3 486.5 417.2 485.7 417.5 C483 417.2 481.6 418.3 481.4 419.8 C481.2 422 481 424.5 480.4 427.6 C480.5 430.5 481.8 432.5 483.7 433.9 C486 435 489 435.2 491.2 435 C493.5 435.2 495.5 435.6 497.4 435.8 L499.4 437 M489.6 419 L488.4 421 L488.4 422.2 C491 426 495 431 499.4 437 M474.7 429.6 L490.8 437.4 L492.3 441.7 M475 432 L489.5 439 M476.5 430 L475.3 432.4 M479 431.2 L477.8 433.6 M481.5 432.4 L480.3 434.8 M484 433.6 L482.8 436 M486.5 434.8 L485.3 437.2"/>
<!-- bottom left pieces -->
<rect x="422.3" y="520.5" width="56.5" height="5.4" rx="1"/>
<rect x="422.3" y="626.3" width="56.5" height="5.7" rx="1"/>
<rect x="412.3" y="532.3" width="5.4" height="87.3" rx="0.8"/>
<path d="M478.8 535.4 V531.5 Q478.8 530.5 477.8 530.5 H423.6 Q422.6 530.5 422.6 531.5 V620.2 Q422.6 621.2 423.6 621.2 H478.8 V616.6 H464.1 Q463.1 616.6 463.1 615.5 Q463.1 614.4 464.1 614.4 H478.8 V538.2 H464.1 Q463.1 538.2 463.1 536.8 Q463.1 535.4 464.1 535.4 Z"/>
<!-- bottom right pieces -->
<rect x="498.2" y="520.5" width="55.5" height="5.4" rx="1"/>
<rect x="498.2" y="626.3" width="55.5" height="5.7" rx="1"/>
<rect x="558.3" y="532.3" width="5.4" height="87.3" rx="0.8"/>
<path d="M498.2 535.4 V531.5 Q498.2 530.5 499.2 530.5 H552.7 Q553.7 530.5 553.7 531.5 V620.2 Q553.7 621.2 552.7 621.2 H498.2 V616.6 H512.9 Q513.9 616.6 513.9 615.5 Q513.9 614.4 512.9 614.4 H498.2 V538.2 H512.9 Q513.9 538.2 513.9 536.8 Q513.9 535.4 512.9 535.4 Z"/>
<!-- front elevation -->
<path d="M748.9 520 V511.1 A6.6 6.6 0 0 1 762.1 511.1 V520"/>
<circle cx="755.5" cy="511.1" r="1.7"/>
<path d="M755.5 514.6 L698.6 560.2 Q698 561.5 699.6 562.2 L755.5 517.5 L811.4 562.2 Q813 561.5 812.4 560.2 Z"/>
<path d="M714.9 549.7 L722.8 597.5 M795.8 549.7 L787.5 597.5"/>
<rect x="699.1" y="597.5" width="111.6" height="7.3" rx="0.8"/>
<path d="M699.5 599.6 H810.3" stroke-width="1.6"/>
<path d="M700 603 H810" stroke="#a0a0a0"/>
<rect x="724" y="604.8" width="62.2" height="5" rx="1.2"/>
<circle cx="755.2" cy="557.2" r="14.5"/>
<path d="M 756.3 548.0 C 754.7 546.3 753.2 546.2 752.4 546.5 C 749.7 546.2 748.3 547.3 748.1 548.8 C 747.9 551.0 747.7 553.5 747.1 556.6 C 747.2 559.5 748.5 561.5 750.4 562.9 C 752.7 564.0 755.7 564.2 757.9 564.0 C 760.2 564.2 762.2 564.6 764.1 564.8 L 766.1 566.0 M 756.3 548.0 L 755.1 550.0 L 755.1 551.2 C 757.7 555.0 761.7 560.0 766.1 566.0 M 741.4 558.6 L 757.5 566.4 L 759.0 570.7 M 741.7 561.0 L 756.2 568.0 M 743.2 559.0 L 742.0 561.4 M 745.7 560.2 L 744.5 562.6 M 748.2 561.4 L 747.0 563.8 M 750.7 562.6 L 749.5 565.0 M 753.2 563.8 L 752.0 566.2"/>
<!-- isometric house -->
<!-- base top outline -->
<path d="M676.8 387.9 L694.3 378.5 M676.8 387.9 L755.6 432 L819.3 396.6 L800.6 386"/>
<path d="M676.8 392.9 L755.6 438.3 L819.3 401"/>
<path d="M676.8 387.9 V392.9 M755.6 432 V438.3 M819.3 396.6 V401"/>
<path d="M681 388.5 L695.5 380.8 M681 388.5 L755.6 430 L814.5 397 L799.8 389"/>
<path d="M676.8 390.4 L755.6 435.2 L819.3 398.8" stroke="#909090"/>
<path d="M716.5 413 V419"/>
<!-- walls -->
<path d="M691.1 353.1 L696.7 396.6"/>
<path d="M747.7 392.2 L742.8 424.6 M749.5 392.8 L744.6 425.2"/>
<path d="M800.6 377.3 L799.4 392.2 M802 377 L800.8 392 M784.4 386 L798 392.9"/>
<ellipse cx="719.1" cy="375.4" rx="9.8" ry="13.6" transform="rotate(-22 719.1 375.4)"/>
<ellipse cx="720.5" cy="376.5" rx="7.5" ry="11.5" transform="rotate(-22 720.5 376.5)"/>
<path d="M718 366 L724 384 M719 367 L725 383"/>
<!-- right roof -->
<path d="M716.6 342.5 L755.2 402.2 L819.9 364.9 L781.3 308"/>
<path d="M789.8 328.8 L795.5 336.4 M791.5 328 L797 335.5"/>
<path d="M734.8 361 L739.6 368.6 M736.4 360.2 L741.2 367.8"/>
<!-- ridge double -->
<path d="M725.4 337.4 L770.2 311.3 M726 339.8 L771.5 313.3"/>
<!-- left roof -->
<path d="M676.4 356.4 L714.8 334.8 M676.4 356.4 L715.8 342.2 M677 358 L716 344" />
<path d="M722 330.5 C735 321 752 313 770.2 309.7"/>
<!-- tabs -->
<path d="M715.3 347.5 V333.5 Q716 329.5 720 330 Q724.5 331 725.4 337 V347.6"/>
<circle cx="719.6" cy="337.4" r="1.4"/>
<path d="M770.8 314 V302 Q771.5 298 775 298.5 Q779.5 299.5 781.3 305 V314.6"/>
<circle cx="774.6" cy="305.2" r="1.4"/>
</g>
<!-- red center lines -->
<g stroke="#b00000" stroke-width="1" stroke-dasharray="3 1" fill="none" shape-rendering="crispEdges">
<path d="M488.5 365 V491"/>
<path d="M468.1 428.5 H508.9"/>
<path d="M477.8 381.1 H498.5"/>
<path d="M755.5 495.3 V640"/>
</g>
<circle cx="251.5" cy="536.5" r="5.3" fill="none" stroke="#b00000" stroke-width="1"/>
<path d="M231.2 536.5 H272 M251.5 515.8 V556.6" stroke="#c00000" stroke-width="1"/>
<!-- dimensions -->
<g stroke="#0a6e6e" stroke-width="1" fill="none" shape-rendering="crispEdges">
<path d="M756.3 504.5 H828 M786.2 609.4 H828 M826 504.5 V609.4"/>
<path d="M699.1 604.8 V629 M810.7 604.8 V629 M699.1 626.8 H810.7"/>
</g>
<g fill="#0a6e6e">
<path d="M826 504.5 L824.8 509 H827.2 Z M826 609.4 L824.8 605 H827.2 Z"/>
<path d="M699.1 626.8 L703.6 625.6 V628 Z M810.7 626.8 L806.2 625.6 V628 Z"/>
</g>
<text x="0" y="0" transform="translate(824.5 557) rotate(-90)" font-family="Liberation Sans" font-size="6" fill="#0a5a5a" opacity="0.7" text-anchor="middle">225</text>
<text x="755.5" y="625.5" font-family="Liberation Sans" font-size="6" fill="#0a5a5a" opacity="0.7" text-anchor="middle">220</text>
<!-- cursor ring -->
<circle cx="617.3" cy="442.7" r="39.6" fill="url(#gRing)"/>
<path d="M616.7 442.3 V466 L622.9 461.4 L628.3 471.8 L632.2 469.5 L627.8 459.9 L633.3 459.3 Z" fill="#fff" stroke="#fff" stroke-width="1.8" stroke-linejoin="round"/>
<path d="M616.7 442.3 V466 L622.9 461.4 L628.3 471.8 L632.2 469.5 L627.8 459.9 L633.3 459.3 Z" fill="#fff" stroke="#000" stroke-width="1" stroke-linejoin="round"/>

</svg>
<svg class="a" style="left:72px;top:746px" width="1082" height="52" viewBox="72 746 1082 52">
<rect x="72" y="746" width="1082" height="52" fill="#ececec"/>
<rect x="72" y="748.5" width="1081" height="22" fill="#fff" stroke="#c2c2c2" stroke-width="1"/>
<rect x="1138.5" y="749" width="14.5" height="21" fill="#f5f5f5"/>
<rect x="1142" y="750" width="8" height="17" rx="4" fill="#7f7f7f"/>
<text x="77" y="762.5" font-family="Liberation Sans" font-size="13" fill="#1a1ad0" stroke="#1a1ad0" stroke-width="0.15"><tspan font-style="italic">Kommando:</tspan> new</text>
<text x="73" y="789.5" font-family="Liberation Sans" font-size="13" fill="#111" stroke="#111" stroke-width="0.15">Kommando:</text>
<rect x="148" y="776" width="979" height="18" fill="#fff"/>
<rect x="1127.5" y="772.5" width="25" height="25" fill="#f0f0f0" stroke="#b4b4b4" stroke-width="1"/>
<rect x="1133.5" y="780.5" width="13" height="9" fill="#f4f4f4" stroke="#666" stroke-width="1"/>
<rect x="1133" y="780" width="14" height="3" fill="#111"/>
<rect x="72" y="797" width="1082" height="1" fill="#c8c8c8"/>
</svg>

<svg class="a" style="left:1154px;top:107px" width="346" height="691" viewBox="1154 107 346 691">
<defs>
<linearGradient id="gTitle" x1="0" y1="0" x2="0" y2="1"><stop offset="0" stop-color="#ececec"/><stop offset="1" stop-color="#d9d9d9"/></linearGradient>
<linearGradient id="gLBtn" x1="0" y1="0" x2="0" y2="1"><stop offset="0" stop-color="#e6e6e6"/><stop offset="0.4" stop-color="#efefef"/><stop offset="1" stop-color="#f6f6f6"/></linearGradient>
<linearGradient id="gRD" x1="0" y1="0" x2="1" y2="0"><stop offset="0" stop-color="#f6f6f6"/><stop offset="0.5" stop-color="#e2e2e2"/><stop offset="0.93" stop-color="#cbcbcb"/><stop offset="0.96" stop-color="#b8b8b8"/><stop offset="1" stop-color="#c8c8c8"/></linearGradient>
<g id="eye">
<path d="M-7.5 0.3 C-6 -3.8 -3 -5.5 0 -5.5 C3 -5.5 6.5 -3.8 7.5 0 C6.5 3.8 3.5 5.5 0 5.5 C-3.5 5.5 -6.5 3.8 -7.5 0.3 Z" fill="#000"/>
<path d="M-5 0 C-4.2 2.8 -2.2 3.8 0 3.8 C2.2 3.8 4.5 2.8 5 0 C3.8 -1.5 2.5 -2 0 -2 C-2.5 -2 -3.8 -1.5 -5 0 Z" fill="#fff"/>
<circle cx="0" cy="-0.5" r="2.8" fill="#000"/>
<path d="M-1.2 -2 L-0.4 -1.2" stroke="#999" stroke-width="0.6"/>
</g>
<g id="lock">
<path d="M-3.2 0 V-2.5 C-3.2 -5.5 3.2 -5.5 3.2 -2.5 V0" fill="none" stroke="#b8b8b8" stroke-width="1.3"/>
<rect x="-5" y="-0.3" width="10" height="7.5" fill="#b4b4b4"/>
</g>
<g id="pencil">
<path d="M-6.5 6.5 L-5.5 3 L4 -6.5 L6.5 -4 L-3 5.5 Z" fill="#e6a83a" stroke="#8a6018" stroke-width="0.7" stroke-linejoin="round"/>
<path d="M3 -5.5 L4.5 -7 C5.5 -8 6.5 -7.5 7.5 -6.5 C8.3 -5.5 8 -4.5 7 -3.5 L5.5 -2 Z" fill="#e81a1a"/>
<path d="M-6.5 6.5 L-5.7 3.8 L-3.8 5.7 Z" fill="#5a3a10"/>
</g>
</defs>
<!-- dock title -->
<rect x="1154" y="107" width="301" height="1" fill="#c0c0c0"/>
<rect x="1154" y="108" width="1.5" height="690" fill="#c6c6c6"/>
<rect x="1155.5" y="108" width="299.5" height="22.5" fill="url(#gTitle)"/>
<circle cx="1164" cy="118" r="7" fill="#6c6c6c"/>
<path d="M1161 115 L1167 121 M1167 115 L1161 121" stroke="#e8e8e8" stroke-width="1.8" stroke-linecap="round"/>
<circle cx="1182" cy="118" r="7" fill="#6c6c6c"/>
<rect x="1180" y="114.5" width="5.5" height="4.5" fill="none" stroke="#e8e8e8" stroke-width="1"/>
<rect x="1178" y="117" width="5.5" height="4.5" fill="#6c6c6c" stroke="#e8e8e8" stroke-width="1"/>
<text x="1322" y="123" font-family="Liberation Sans" font-size="12" fill="#222" stroke="#222" stroke-width="0.15" text-anchor="middle">Layerliste</text>
<!-- header buttons -->
<rect x="1155.5" y="130.5" width="299" height="25.5" fill="url(#gLBtn)"/>
<path d="M1155.5 130.5 H1454.5 M1155.5 155.5 H1454.5 M1155.5 130 V156 M1215 130 V156 M1275 130 V156 M1335 130 V156 M1395 130 V156 M1454.5 130 V156" stroke="#a9a9a9" stroke-width="1.2"/>
<use href="#eye" x="1185" y="142.5"/>
<g opacity="0.35"><use href="#eye" x="1245" y="142.5"/></g>
<path d="M1299 142.7 H1311 M1305 136.7 V148.7" stroke="#7a0000" stroke-width="3"/>
<path d="M1299.5 142.7 H1310.5 M1305 137.2 V148.2" stroke="#f00000" stroke-width="2"/>
<rect x="1359" y="141.2" width="12" height="3.2" fill="#e80000" stroke="#8a0000" stroke-width="0.5"/>
<use href="#pencil" x="1425" y="143"/>
<!-- list -->
<rect x="1155.5" y="156.5" width="299" height="641.5" fill="#fff"/>
<g font-family="Liberation Sans" font-size="13" fill="#111" stroke="#111" stroke-width="0.2" letter-spacing="0.1">
<rect x="1161" y="163" width="16" height="9" fill="#000"/><text x="1183" y="171.0">0</text>
<rect x="1161.5" y="183.5" width="15" height="8" fill="#0e7f7f" stroke="#000" stroke-width="1"/><text x="1183" y="191.0">Bemassungen</text>
<rect x="1161.5" y="203.5" width="15" height="8" fill="#fff" stroke="#000" stroke-width="1"/><text x="1183" y="211.0">Defpoints</text>
<rect x="1161" y="223" width="16" height="9" fill="#000"/><text x="1183" y="231.0">Rahmen</text>
<rect x="1161" y="243" width="16" height="9" fill="#000"/><text x="1183" y="251.0">Sichtbar</text>
<rect x="1161.5" y="263.5" width="15" height="8" fill="#f00" stroke="#000" stroke-width="1"/><text x="1183" y="271.0">Zentrum</text>
</g>
<use href="#eye" x="1423" y="166.5"/><use href="#lock" x="1445" y="166.5"/>
<use href="#eye" x="1423" y="186.5"/><use href="#lock" x="1445" y="186.5"/>
<use href="#eye" x="1423" y="206.5"/><use href="#lock" x="1445" y="206.5"/>
<use href="#eye" x="1423" y="226.5"/><use href="#lock" x="1445" y="226.5"/>
<use href="#eye" x="1423" y="246.5"/><use href="#lock" x="1445" y="246.5"/>
<use href="#eye" x="1423" y="266.5"/><use href="#lock" x="1445" y="266.5"/>
<use href="#pencil" x="1401" y="247"/>
<rect x="1454" y="156" width="1" height="642" fill="#c8c8c8"/>
<!-- right dock -->
<rect x="1455" y="108" width="45" height="690" fill="url(#gRD)"/>
<g fill="#9a9a9a"><rect x="1462" y="116" width="2" height="2"/><rect x="1468" y="116" width="2" height="2"/><rect x="1474" y="116" width="2" height="2"/><rect x="1480" y="116" width="2" height="2"/><rect x="1486" y="116" width="2" height="2"/></g>
<rect x="1456" y="120" width="42.5" height="43" rx="5" fill="#b5b5b5"/>
<rect x="1456" y="417" width="42.5" height="43" rx="5" fill="#b5b5b5"/>
<path d="M1458 262.5 H1498 M1458 409.5 H1498" stroke="#777" stroke-width="1" stroke-dasharray="1 2"/>
<g id="win1">
<rect x="1463.5" y="127.5" width="27" height="27" fill="#fff" stroke="#333" stroke-width="1"/>
<rect x="1463" y="127" width="28" height="4.5" fill="#000"/>
<rect x="1464" y="128" width="3" height="3" fill="#fff"/>
</g>
<use href="#win1" y="47"/><use href="#win1" y="93"/><use href="#win1" y="149"/><use href="#win1" y="195"/><use href="#win1" y="240"/><use href="#win1" y="296"/><use href="#win1" y="344"/>
<!-- icon contents -->
<path d="M1471 140 L1480 136 V148 L1471 152 Z" fill="#999" stroke="#444" stroke-width="0.6"/>
<path d="M1474 141 L1483 137 V149 L1474 153 Z" fill="#fff" stroke="#555" stroke-width="0.6"/>
<path d="M1476 148 L1480 141 L1481 146 Z" fill="none" stroke="#f04040" stroke-width="0.7"/>
<rect x="1470" y="183" width="10" height="8" fill="#f3e9c0" stroke="#777" stroke-width="0.7"/>
<circle cx="1480" cy="191" r="4.5" fill="#f3e9c0" fill-opacity="0.85" stroke="#777" stroke-width="0.7"/>
<rect x="1468.5" y="229" width="17" height="11" rx="2" fill="#f4f4f4" stroke="#b8c8e0" stroke-width="0.8"/>
<g fill="#000"><rect x="1468" y="282" width="4" height="3"/><rect x="1468" y="288" width="4" height="3"/><rect x="1468" y="294" width="4" height="3"/></g>
<g fill="none" stroke="#333" stroke-width="0.7"><rect x="1474.5" y="282.5" width="12" height="2.5"/><rect x="1474.5" y="288.5" width="12" height="2.5"/><rect x="1474.5" y="294.5" width="12" height="2.5"/></g>
<path d="M1469 329 H1485 L1479 337 V344 L1475 345 V337 Z" fill="#bbb" stroke="#555" stroke-width="0.7"/>
<path d="M1468 374 L1476 379 V385 L1468 390 Z M1476 379 H1484 V385 H1476" fill="#eee" stroke="#444" stroke-width="0.7"/>
<path d="M1470 382 H1487" stroke="#f06060" stroke-width="0.6" stroke-dasharray="1.5 1"/>
<g font-family="Liberation Sans" font-size="2.3" fill="#333"><text x="1466" y="431">Command: line</text><text x="1466" y="434">Command: line</text><text x="1466" y="437">Command: line</text><text x="1466" y="440">Command: line</text></g>
<path d="M1464 446.5 H1490" stroke="#333" stroke-width="0.6"/>
<text x="1465" y="450" font-family="Liberation Sans" font-size="2.5" fill="#333">C   command</text>
<rect x="1470" y="480" width="14" height="16" rx="1" fill="#c98a2a" stroke="#7a5010" stroke-width="0.6"/>
<rect x="1472" y="482.5" width="10" height="12" fill="#f6f6f6"/>
<rect x="1474" y="478.5" width="6" height="3" fill="#888"/>
<path d="M1473.5 486 H1480.5 M1473.5 488 H1480.5 M1473.5 490 H1480" stroke="#bbb" stroke-width="0.6"/>
</svg>

<svg class="a" style="left:0;top:798px" width="1500" height="46" viewBox="0 798 1500 46">
<rect x="0" y="798" width="1500" height="46" fill="#dcdcdc"/>
<rect x="0" y="798" width="1500" height="1" fill="#d2d2d2"/>
<g font-family="Liberation Sans" font-size="10.3" fill="#222" stroke="#222" stroke-width="0.12" letter-spacing="-0.1">
<text x="2" y="816">725.5411,185.243</text>
<text x="2" y="836">@725.5411,185.243</text>
<text x="256" y="816">748.8157&lt;14°</text>
<text x="256" y="836">@748.8157&lt;14°</text>
<text x="548.3" y="825.5" letter-spacing="0.05">Element oder Bereich selektieren</text>
<text x="949" y="825.5" letter-spacing="0.1">Keine Objekte selektiert.</text>
</g>
<path d="M253.5 802 V842" stroke="#8a8a8a" stroke-width="1"/>
<path d="M254.5 802 V842" stroke="#f4f4f4" stroke-width="1"/>
<circle cx="509.5" cy="821.5" r="2.6" fill="#c4c4c4"/>
<circle cx="943" cy="821.5" r="2.6" fill="#c4c4c4"/>
<circle cx="1272.5" cy="821.5" r="2.6" fill="#c4c4c4"/>
<path d="M717.5 814.5 C717.5 809.5 721.5 806 726 806 C730.5 806 734.5 809.5 734.5 814.5 V827 C734.5 832 730.5 835.5 726 835.5 C721.5 835.5 717.5 832 717.5 827 Z" fill="#fff" stroke="#555" stroke-width="1"/>
<path d="M717.5 820 C723 818.5 729 818.5 734.5 820" stroke="#444" stroke-width="1.6" fill="none"/>
<rect x="724.5" y="808.5" width="3.5" height="7" rx="1.5" fill="#fff" stroke="#444" stroke-width="1"/>
<path d="M726.2 806 V808.5 M726.2 815.5 V819" stroke="#444" stroke-width="1"/>
</svg>

</body></html>
